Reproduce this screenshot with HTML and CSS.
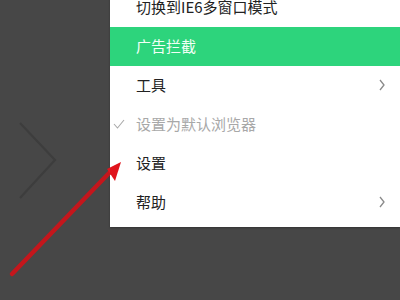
FILE: index.html
```html
<!DOCTYPE html>
<html>
<head>
<meta charset="utf-8">
<link rel="stylesheet" href="styles.css">
</head>
<body>
<div class="screen">
  <svg class="bg-chevron" width="70" height="90" viewBox="0 0 70 90">
    <polyline points="20,13 55,50 20,88" fill="none" stroke="#3d3d3d" stroke-width="2.2"/>
  </svg>
  <div class="menu">
    <div class="item">切换到IE6多窗口模式</div>
    <div class="item active">广告拦截</div>
    <div class="item">工具<span class="arrow"><svg width="8" height="12" viewBox="0 0 8 12"><polyline points="2,1 6,6 2,11" fill="none" stroke="#8a8a8a" stroke-width="1.3"/></svg></span></div>
    <div class="item disabled"><span class="check"><svg width="12" height="10" viewBox="0 0 12 10"><polyline points="1,5 4.5,9 11,1" fill="none" stroke="#aaa" stroke-width="1.1"/></svg></span>设置为默认浏览器</div>
    <div class="item">设置</div>
    <div class="item">帮助<span class="arrow"><svg width="8" height="12" viewBox="0 0 8 12"><polyline points="2,1 6,6 2,11" fill="none" stroke="#8a8a8a" stroke-width="1.3"/></svg></span></div>
  </div>
  <svg class="red-arrow" width="130" height="130" viewBox="0 0 130 130">
    <line x1="12" y1="124" x2="112" y2="20" stroke="#c4161c" stroke-width="4.5" stroke-linecap="round"/>
    <polygon points="121,12 107,19 115,31" fill="#e0141c"/>
  </svg>
</div>
</body>
</html>
```
FILE: styles.css
```css
html, body {
  margin: 0;
  padding: 0;
}
body {
  width: 400px;
  height: 300px;
  overflow: hidden;
  background: #474747;
  font-family: "Noto Sans CJK SC", "Noto Sans", sans-serif;
}
.screen {
  position: relative;
  width: 400px;
  height: 300px;
  display: flex;
  justify-content: flex-end;
  align-items: flex-start;
}
.menu {
  width: 290px;
  margin-top: -12px;
  padding-bottom: 5px;
  background: #ffffff;
  box-shadow: 0 1px 2px rgba(0,0,0,0.3);
}
.item {
  position: relative;
  height: 39px;
  line-height: 38px;
  padding-left: 26px;
  font-size: 15px;
  color: #222;
}
.item.active {
  background: #2dd47c;
  color: #f2fff6;
}
.item.disabled {
  color: #a8a8a8;
}
.check {
  position: absolute;
  left: 3px;
  top: 14px;
  line-height: 0;
}
.arrow {
  position: absolute;
  right: 14px;
  top: 13px;
  line-height: 0;
}
.bg-chevron {
  position: absolute;
  left: 0;
  top: 110px;
}
.red-arrow {
  position: absolute;
  left: 0;
  top: 150px;
}
```
